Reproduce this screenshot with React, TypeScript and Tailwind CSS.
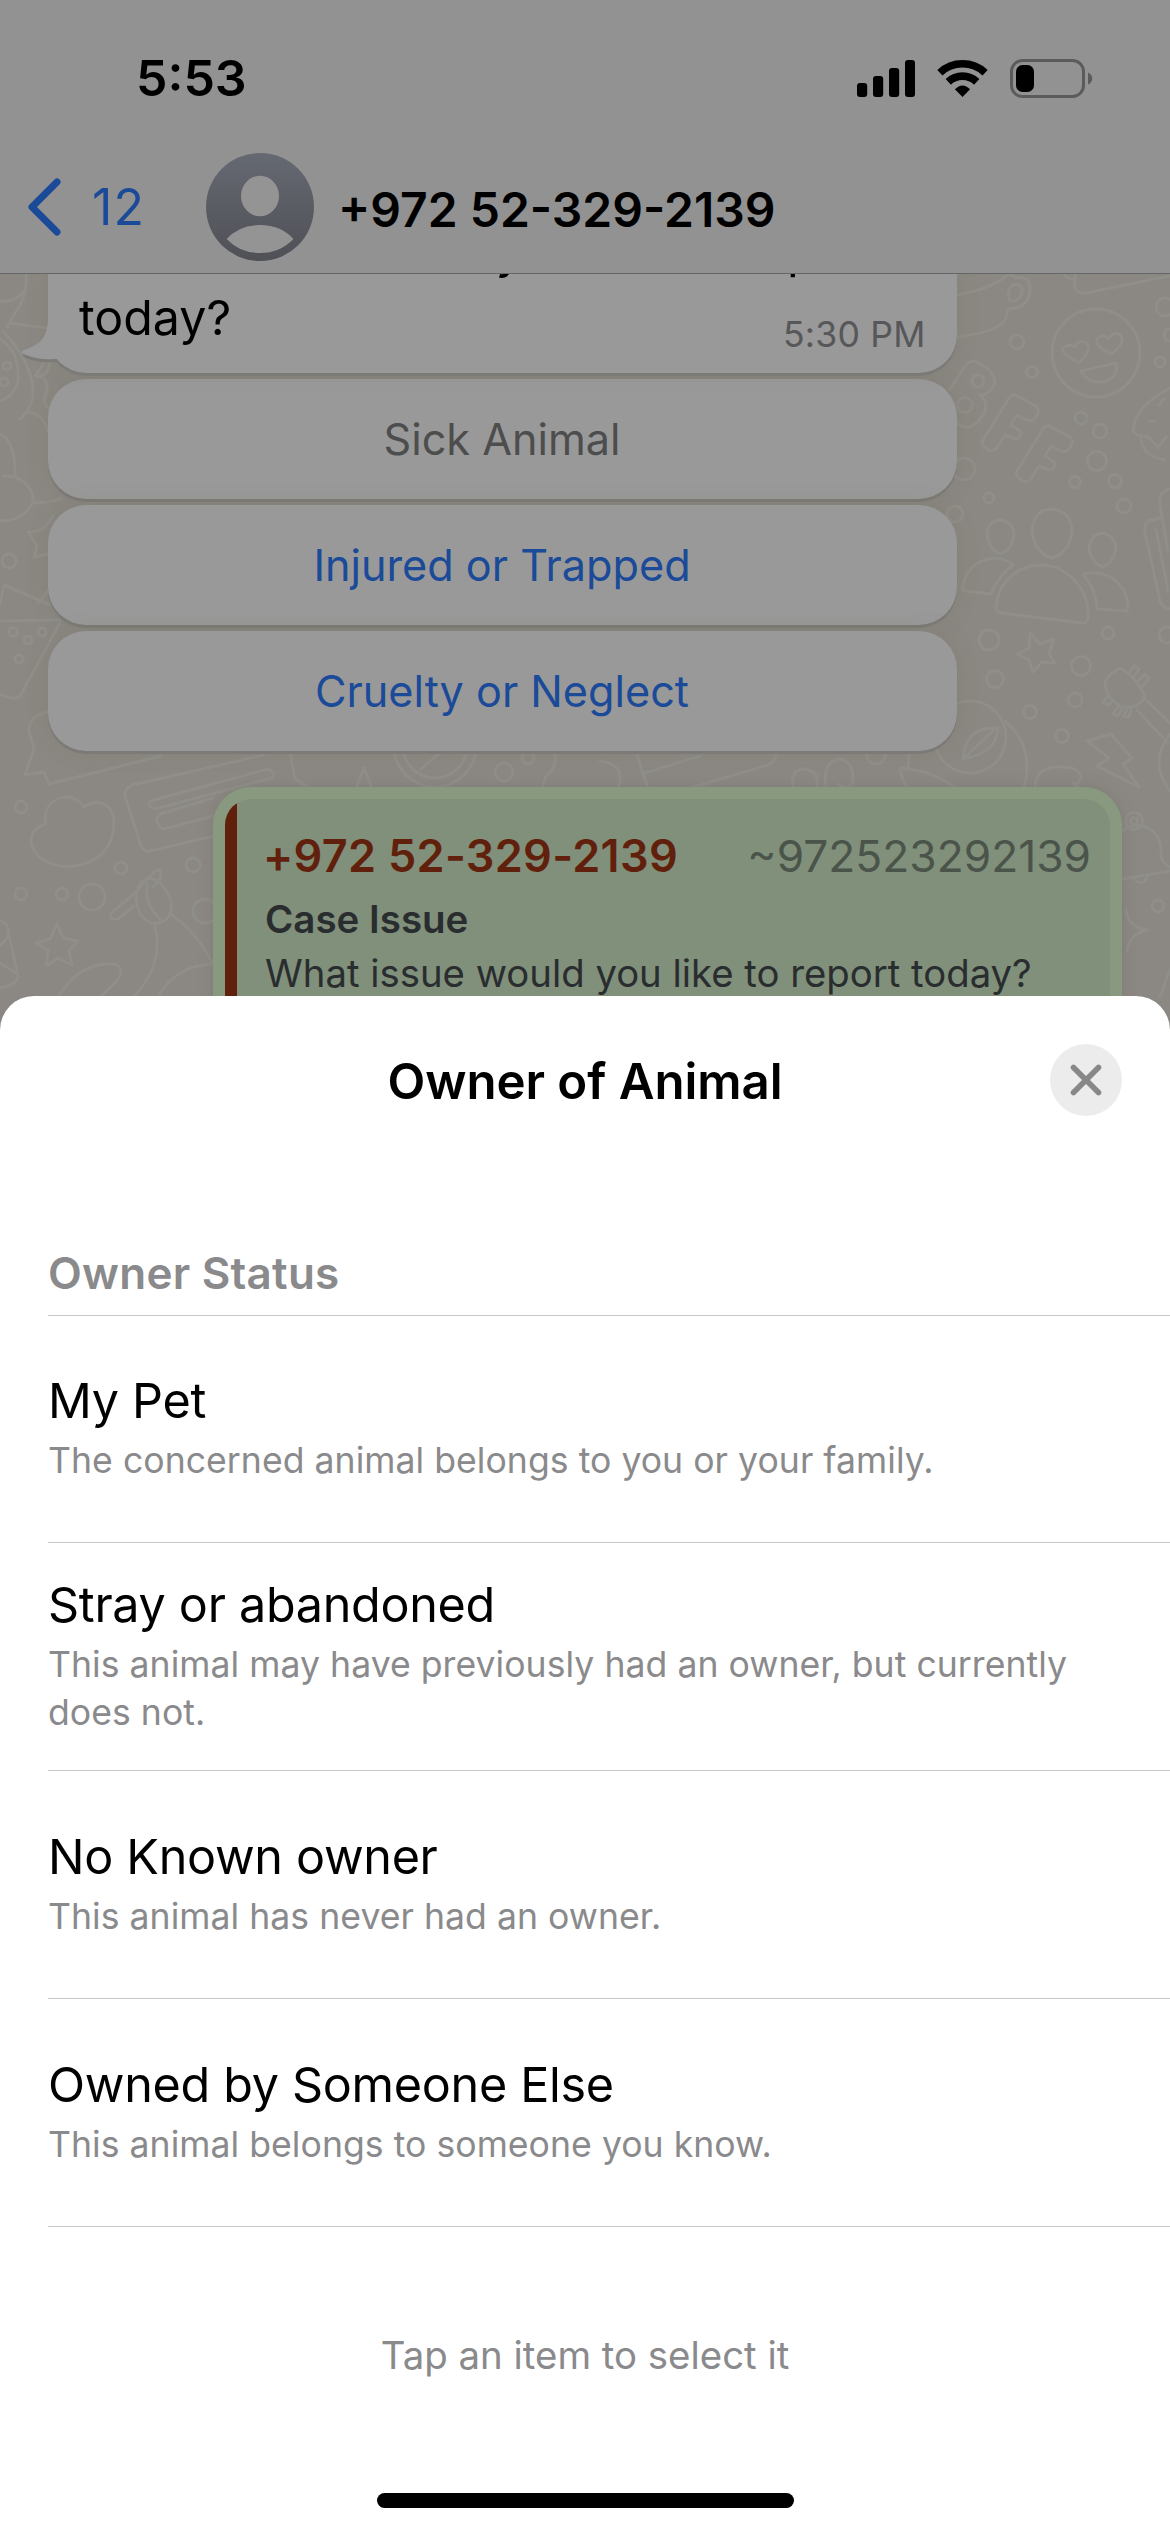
import React from "react";

type Option = { title: string; description: string };

const options: Option[] = [
  { title: "My Pet", description: "The concerned animal belongs to you or your family." },
  {
    title: "Stray or abandoned",
    description: "This animal may have previously had an owner, but currently does not.",
  },
  { title: "No Known owner", description: "This animal has never had an owner." },
  { title: "Owned by Someone Else", description: "This animal belongs to someone you know." },
];

const replies = [
  { label: "Sick Animal", disabled: true },
  { label: "Injured or Trapped", disabled: false },
  { label: "Cruelty or Neglect", disabled: false },
];

/* Small confetti rings scattered over the wallpaper: [cx, cy, r] */
const rings: [number, number, number][] = [
  [1017, 341, 7], [1032, 371, 5.5], [1081, 417, 6], [1100, 430, 7], [1097, 460, 9.5],
  [1075, 481, 5.5], [1115, 480, 6.5], [989, 497, 5], [1124, 505, 7], [964, 468, 11],
  [955, 513, 8], [1165, 306, 9], [1170, 334, 6], [1160, 361, 5], [978, 380, 6],
  [965, 404, 7.5], [989, 639, 10], [1108, 632, 6], [995, 678, 8.5], [1081, 665, 9.5],
  [1075, 699, 7], [1030, 711, 6.5], [1062, 735, 6.5], [1167, 634, 8], [1134, 820, 8.5],
  [1134, 820, 3.5], [1158, 905, 6], [504, 771, 9], [528, 757, 6], [876, 754, 9],
  [21, 806, 6], [121, 867, 6], [193, 864, 7], [21, 893, 6], [62, 893, 6], [92, 896, 13],
  [205, 910, 12], [7, 365, 4], [4, 381, 4], [9, 560, 7], [13, 631, 4.5], [28, 639, 4],
  [42, 631, 4], [19, 658, 4], [435, 745, 41], [435, 745, 32], [970, 736, 36], [1096, 352, 44],
];

const doodles: string[] = [
  /* cup and book */
  "M957 294Q995 287 1008 273M957 336Q1000 331 1006 317L1008 308Q1030 308 1030 286Q1029 274 1016 277L1008 272M1009 298Q1006 284 1018 283Q1026 288 1019 297Q1012 303 1009 298z",
  "M1064 273Q1068 279 1076 278M1075 273L1075 287Q1077 293 1086 292L1170 275",
  /* smiling face */
  "M1079 362Q1060 352 1063 347Q1069 342 1075 346Q1078 339 1085 341Q1091 346 1087 352Q1084 358 1079 362z M1112 353Q1095 346 1097 338Q1103 332 1109 338Q1112 331 1119 333Q1125 338 1120 345z M1081 370L1116 362Q1119 378 1103 381Q1088 382 1081 370z",
  /* BFF */
  "M950 388L966 364Q971 358 977 361Q995 370 995 382Q990 394 980 394Q989 402 984 412Q975 428 965 426L957 423",
  "M983 439L1009 397Q1012 392 1017 395L1036 405Q1040 409 1037 414Q1033 422 1027 419L1017 414L1011 424L1020 430Q1022 437 1016 438L1005 434L996 448Q990 452 984 445Q981 442 983 439z",
  "M1017 470L1043 428Q1046 423 1051 426L1070 436Q1074 440 1071 445Q1067 453 1061 450L1051 445L1045 455L1054 461Q1056 468 1050 469L1039 465L1030 479Q1024 483 1018 476Q1015 473 1017 470z",
  /* ice cream */
  "M1170 387Q1135 405 1133 430Q1136 436 1147 435L1158 446L1166 436M1141 437Q1142 455 1165 459M1159 404L1164 398M1149 420L1154 420",
  /* group */
  "M987 532Q989 519 1000 519Q1013 520 1014 533Q1012 550 1000 553Q988 548 987 532z M1032 530Q1034 508 1052 508Q1071 510 1072 530Q1069 553 1051 557Q1034 550 1032 530z M1089 546Q1091 533 1103 532Q1115 535 1116 547Q1113 563 1102 566Q1090 560 1089 546z",
  "M996 606C998 580 1020 563 1042 564C1072 566 1090 592 1088 618Q1087 623 1082 622L1002 612Q996 611 996 606z M962 588C965 570 976 558 995 557Q1007 558 1013 564Q998 575 991 593L965 590z M1083 573Q1100 569 1112 577C1125 586 1130 600 1127 610L1097 608Q1096 588 1083 573z",
  /* star, phone, horn */
  "M1030 632L1040 643L1054 638L1049 653L1055 662L1042 661L1033 671L1029 659L1017 653L1029 647z",
  "M1170 488Q1158 490 1160 505L1168 550M1160 517L1148 520Q1144 522 1145 532L1160 600Q1162 607 1170 608M1156 528L1168 590",
  "M1121 667Q1108 672 1105 682Q1105 695 1120 705Q1135 710 1145 697Q1140 680 1121 667zM1147 700L1170 722M1137 709L1168 742M1130 670L1135 664L1139 668L1134 676M1138 680L1145 673L1149 678L1142 686M1108 695L1103 701L1108 704L1113 699M1118 706L1113 713L1118 715L1122 708M1127 709L1123 715L1129 716L1131 709",
  /* leaf badge, lightning, cloud */
  "M963 758Q965 725 998 727Q997 752 963 758L995 728M1005 720Q1035 745 1024 787M1087 740L1111 733L1132 757L1123 763L1139 786L1097 765L1109 757z",
  "M1035 787Q1035 768 1055 766Q1078 764 1081 776Q1079 784 1073 782L1080 787M1170 733Q1148 762 1170 790",
  /* bell and sparkle */
  "M1122 830Q1140 818 1155 832Q1162 840 1161 855Q1164 864 1170 866M1122 878L1170 870M1133 876Q1142 889 1149 873M1126 908Q1127 926 1148 929Q1130 932 1127 950M1170 968L1160 996",
  /* row above the quoted message */
  "M290 751L295 778L310 787M356 787L364 767L372 787M421 768L440 752M555 751Q557 768 546 775L542 787M600 760Q628 765 618 787M636 751L648 787M645 772L700 755M690 787L765 765Q778 760 775 751M793 787Q790 768 805 768Q820 770 817 787M826 787Q822 760 840 758Q856 762 852 783Q846 790 838 783M900 767Q935 770 955 787M900 767Q902 780 908 787M909 751L908 768",
  /* left column */
  "M48 711Q28 715 29 730L34 748L25 774L44 771L49 783L161 755M214 835L150 850Q145 852 141 845L125 795Q124 788 132 784L264 754M150 800L268 768Q276 771 272 777L155 808Q147 806 150 800zM213 797L160 813Q155 818 158 822Q160 830 168 827L213 815",
  "M46 823C40 800 70 785 84 806C100 795 118 805 113 830C110 855 85 868 60 865C30 860 20 830 46 823z",
  "M57 923L63 937L78 940L69 950L72 964L58 957L46 965L48 949L36 942L50 938z",
  "M134 893L155 870Q163 866 160 878L153 886M134 893L111 912Q108 919 118 918L134 905M142 880C130 895 138 918 152 922C170 925 178 905 165 888Q155 873 142 880zM148 883Q142 900 160 918M172 914Q200 935 212 962M155 924Q165 965 130 1000M158 996Q175 965 212 963",
  "M58 996Q80 960 115 963Q128 970 112 985L90 1005M0 920Q8 922 8 930L18 975Q17 984 0 987M0 945L9 935M0 962L16 972",
  "M26 273Q28 295 15 312L7 326M0 300Q15 302 24 290M10 322L46 327M3 330Q35 365 33 395Q30 410 20 418M0 338Q20 350 18 380Q15 395 0 400M44 361Q38 372 35 375Q48 378 50 360M44 378Q50 385 45 395Q43 402 49 408M27 412Q42 410 48 430",
  "M0 433Q16 440 15 476Q34 485 33 500Q25 520 0 520M3 475L15 476M33 502Q50 502 62 497M53 515Q45 528 38 530L28 531L37 545L34 556L48 553M0 603L4 584L50 604M0 620L60 619M60 622L20 695Q16 700 0 693M38 602L48 590",
];

function Wallpaper() {
  return (
    <svg
      className="absolute inset-x-0 top-0"
      width="1170"
      height="763"
      viewBox="0 273 1170 763"
      fill="none"
      stroke="#8f8e88"
      strokeWidth="3"
      strokeLinejoin="round"
      strokeLinecap="round"
    >
      {doodles.map((d, i) => (
        <path key={i} d={d} />
      ))}
      {rings.map(([cx, cy, r], i) => (
        <circle key={i} cx={cx} cy={cy} r={r} />
      ))}
    </svg>
  );
}

function StatusIcons() {
  return (
    <div className="flex items-center">
      <svg width="58" height="37" viewBox="0 0 58 37" fill="#000">
        <rect x="0" y="23" width="10.2" height="14" rx="3" />
        <rect x="16" y="16" width="10.2" height="21" rx="3" />
        <rect x="32" y="8" width="10.2" height="29" rx="3" />
        <rect x="48" y="0" width="10" height="37" rx="3" />
      </svg>
      <svg className="ml-[22px]" width="51" height="37" viewBox="0 0 51 37" fill="none" stroke="#000">
        <path d="M2.9 12.7A33.2 33.2 0 0 1 48.1 12.7" strokeWidth="7.6" />
        <path d="M11.3 21.8A20.8 20.8 0 0 1 39.7 21.8" strokeWidth="7.8" />
        <path d="M25.5 37L17.9 29.2Q25.5 21.6 33.1 29.2z" fill="#000" stroke="none" />
      </svg>
      <svg className="ml-[22px]" width="83" height="39" viewBox="0 0 83 39" fill="none">
        <rect x="1.5" y="1.5" width="72" height="36" rx="11" stroke="#5b5b5b" strokeWidth="3" />
        <rect x="6" y="6" width="18" height="27" rx="6.5" fill="#000" />
        <path d="M78 13.5Q82.2 15.5 82.2 19.5Q82.2 23.5 78 25.5z" fill="#5b5b5b" />
      </svg>
    </div>
  );
}

function ChatHeader() {
  return (
    <header className="relative z-10 h-[274px] shrink-0 border-b border-[#666668] bg-[#929292]">
      <div className="flex h-[153px] items-center justify-between pt-[3px] pr-[77px] pl-[136px]">
        <span className="text-[50px] leading-[60px] font-semibold">5:53</span>
        <StatusIcons />
      </div>
      <div className="flex h-[108px] items-center pl-[28px]">
        <svg width="33" height="58" viewBox="0 0 33 58" fill="none" stroke="#1a4a98" strokeWidth="7" strokeLinecap="round" strokeLinejoin="round">
          <path d="M29 4L4 29L29 54" />
        </svg>
        <span className="ml-[31px] w-[54px] text-[50px] leading-[60px] tracking-[1.2px] text-[#1a4a98]">12</span>
        <svg className="ml-[60px]" width="108" height="108" viewBox="0 0 108 108">
          <defs>
            <linearGradient id="avatar" x1="0" y1="0" x2="0" y2="1">
              <stop offset="0" stopColor="#656971" />
              <stop offset="1" stopColor="#505057" />
            </linearGradient>
          </defs>
          <circle cx="54" cy="54" r="54" fill="url(#avatar)" />
          <ellipse cx="54" cy="43" rx="19" ry="20.2" fill="#949494" />
          <path d="M20.6 86Q33 72 54 72Q75 72 87.4 86Q74 100 54 100Q34 100 20.6 86z" fill="#949494" />
        </svg>
        <h1 className="mt-[5px] ml-[24px] text-[48px] leading-[60px] font-semibold">+972 52-329-2139</h1>
      </div>
    </header>
  );
}

function IncomingMessage() {
  return (
    <div className="relative w-[909px]">
      <div className="flex h-[99px] items-end justify-between overflow-hidden rounded-b-[38px] bg-[#999] pr-[31px] pb-[22px] pl-[31px] shadow-[0_3px_0_#7b7a76,0_0_20px_rgba(110,115,95,0.25)]">
        <p className="w-[670px] text-[48.3px] leading-[67px] whitespace-nowrap">
          What issue would you like to report
          <br />
          today?
        </p>
        <time className="-mb-[14px] w-[143px] text-[35.6px] leading-[60px] tracking-[0.2px] whitespace-nowrap text-[#575759]">5:30 PM</time>
      </div>
      <svg className="absolute bottom-0 -left-[26px]" width="42" height="56" viewBox="0 0 42 56">
        <path d="M2 36Q-1 39 4 41C14 45 24 46 34 45L34 30z" fill="#7b7a76" />
        <path d="M26 0C26 20 18 28 2 33Q-3 36 4 38C14 42 24 43 32 42L38 42L38 0z" fill="#999" />
      </svg>
    </div>
  );
}

function QuotedMessage() {
  return (
    <div className="mt-[36px] ml-[165px] h-[260px] w-[909px] rounded-t-[38px] bg-[#88997f] px-3 pt-3 shadow-[0_0_14px_rgba(110,105,100,0.35)]">
      <div className="flex h-full overflow-hidden rounded-t-[26px] bg-[#80907a]">
        <div className="w-3 shrink-0 bg-[#61200c]" />
        <div className="flex-1 pt-[27px] pr-[19px] pl-[26px]">
          <div className="flex items-center justify-between leading-[60px]">
            <span className="text-[45px] font-semibold tracking-[0.3px] text-[#61200c]">+972 52-329-2139</span>
            <span className="text-[44.3px] text-[#4b544b]">~972523292139</span>
          </div>
          <p className="mt-[6px] pl-[2px] text-[38.5px] leading-[54px] font-semibold text-[#2a2d2f]">Case Issue</p>
          <p className="pl-[2px] text-[38.3px] leading-[54px] whitespace-nowrap text-[#2a2d2f]">
            What issue would you like to report today?
          </p>
        </div>
      </div>
    </div>
  );
}

function Chat() {
  return (
    <main className="relative h-[762px] shrink-0 overflow-hidden bg-[#8b8782]">
      <Wallpaper />
      <div className="relative flex flex-col pl-12">
        <IncomingMessage />
        <div className="mt-[6px] flex w-[909px] flex-col gap-[6px]">
          {replies.map((r) => (
            <button
              key={r.label}
              className={`flex h-[120px] items-center justify-center rounded-[38px] bg-[#999] pr-[1px] text-[43.2px] leading-[60px] shadow-[0_3px_0_#7b7a76,0_0_20px_rgba(110,115,95,0.25)] ${
                r.disabled ? "text-[#4d4d4d]" : "text-[#1a4a98]"
              }`}
            >
              {r.label}
            </button>
          ))}
        </div>
        <QuotedMessage />
      </div>
    </main>
  );
}

function OwnerSheet() {
  return (
    <section className="relative z-10 -mt-[40px] flex h-[1536px] shrink-0 flex-col rounded-t-[34px] bg-white">
      <div className="grid h-[168px] shrink-0 grid-cols-[1fr_auto_1fr] items-center px-12">
        <span />
        <h2 className="mt-[2px] text-[49.2px] leading-[60px] font-semibold tracking-[-0.05px]">Owner of Animal</h2>
        <button className="flex size-[72px] items-center justify-center justify-self-end rounded-full bg-[#ececed]" aria-label="Close">
          <svg width="32" height="32" viewBox="0 0 32 32" fill="none" stroke="#88888a" strokeWidth="5.6" strokeLinecap="round">
            <path d="M3.5 3.5L28.5 28.5M28.5 3.5L3.5 28.5" />
          </svg>
        </button>
      </div>
      <div className="ml-12 flex h-[152px] shrink-0 items-end border-b border-[#c6c6c8] pb-[12px]">
        <h3 className="text-[44px] leading-[60px] font-semibold tracking-[0.25px] text-[#8a8a8c]">Owner Status</h3>
      </div>
      <ul className="ml-12">
        {options.map((o) => (
          <li key={o.title} className="flex h-[228px] flex-col justify-center border-b border-[#c6c6c8] pr-[50px] first:h-[227px] first:pb-[2px]">
            <p className="text-[48.5px] leading-[58px] tracking-[-0.3px]">{o.title}</p>
            <p className="mt-[7px] text-[35.6px] leading-[48px] tracking-[0.04px] text-[#8a8a8c]">{o.description}</p>
          </li>
        ))}
      </ul>
      <p className="mt-[98px] text-center text-[38.4px] leading-[60px] text-[#8a8a8c]">Tap an item to select it</p>
      <div className="mt-auto mb-[24px] h-[15px] w-[417px] self-center rounded-full bg-black" />
    </section>
  );
}

export default function App() {
  return (
    <div className="flex h-[2532px] w-[1170px] flex-col overflow-hidden bg-white font-['Inter',sans-serif] text-black">
      <ChatHeader />
      <Chat />
      <OwnerSheet />
    </div>
  );
}
